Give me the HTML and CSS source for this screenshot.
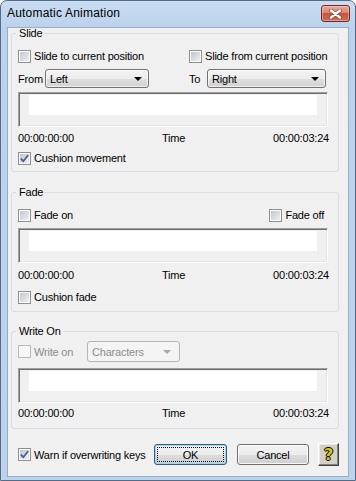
FILE: index.html
```html
<!DOCTYPE html>
<html lang="en">
<head>
    <meta charset="UTF-8">
    <title>Automatic Animation</title>
    <link rel="stylesheet" href="styles.css">
</head>
<body>

<div class="window">
    <div class="titlebar">
        <span class="title">Automatic Animation</span>
        <span class="close-btn">
            <svg width="13" height="10" viewBox="0 0 13 10">
                <path d="M2 1.5 L11 8.5 M11 1.5 L2 8.5" stroke="#5a2418" stroke-width="4" stroke-linecap="round" opacity="0.55"/>
                <path d="M2 1.5 L11 8.5 M11 1.5 L2 8.5" stroke="#fff" stroke-width="2.4" stroke-linecap="round"/>
            </svg>
        </span>
    </div>

    <div class="client">

        <!-- Slide -->
        <fieldset class="group group-slide">
            <legend>Slide</legend>
            <div class="two-col check-row">
                <label class="check"><span class="cb"></span>Slide to current position</label>
                <label class="check"><span class="cb"></span>Slide from current position</label>
            </div>
            <div class="two-col select-row">
                <div class="field">
                    <span class="lbl lbl-from">From</span>
                    <div class="combo combo-from"><span>Left</span><span class="arrow"></span></div>
                </div>
                <div class="field">
                    <span class="lbl lbl-to">To</span>
                    <div class="combo combo-to"><span>Right</span><span class="arrow"></span></div>
                </div>
            </div>
            <div class="timeline"><div class="track"></div></div>
            <div class="times">
                <span>00:00:00:00</span><span class="mid">Time</span><span class="end">00:00:03:24</span>
            </div>
            <label class="check cushion">
                <span class="cb">
                    <svg width="11" height="11" viewBox="0 0 11 11"><path d="M1.8 5.6 L4.3 8.2 L9.2 2" fill="none" stroke="#4a5f98" stroke-width="1.8"/></svg>
                </span>Cushion movement
            </label>
        </fieldset>

        <!-- Fade -->
        <fieldset class="group group-fade">
            <legend>Fade</legend>
            <div class="fade-row check-row">
                <label class="check"><span class="cb"></span>Fade on</label>
                <label class="check"><span class="cb"></span>Fade off</label>
            </div>
            <div class="timeline"><div class="track"></div></div>
            <div class="times">
                <span>00:00:00:00</span><span class="mid">Time</span><span class="end">00:00:03:24</span>
            </div>
            <label class="check cushion"><span class="cb"></span>Cushion fade</label>
        </fieldset>

        <!-- Write On -->
        <fieldset class="group group-write">
            <legend>Write On</legend>
            <div class="write-row">
                <label class="check disabled"><span class="cb"></span>Write on</label>
                <div class="combo combo-chars disabled"><span>Characters</span><span class="arrow"></span></div>
            </div>
            <div class="timeline"><div class="track"></div></div>
            <div class="times">
                <span>00:00:00:00</span><span class="mid">Time</span><span class="end">00:00:03:24</span>
            </div>
        </fieldset>

        <div class="footer">
            <label class="check">
                <span class="cb">
                    <svg width="11" height="11" viewBox="0 0 11 11"><path d="M1.8 5.6 L4.3 8.2 L9.2 2" fill="none" stroke="#4a5f98" stroke-width="1.8"/></svg>
                </span>Warn if overwriting keys
            </label>
            <div class="btn btn-ok"><span class="focus">OK</span></div>
            <div class="btn btn-cancel">Cancel</div>
            <div class="help-btn">?</div>
        </div>

    </div>
</div>

</body>
</html>
```

FILE: styles.css
```css
* {
    box-sizing: border-box;
}

body {
    margin: 0;
    background: #fff;
    font-family: "Liberation Sans", Arial, sans-serif;
    font-size: 11px;
    letter-spacing: -0.2px;
    color: #000;
}

/* window frame */
.window {
    width: 356px;
    height: 481px;
    border: 1px solid #566b85;
    border-radius: 7px 7px 0 0;
    background: linear-gradient(#cadef3 0, #bad2eb 26px, #bcd3ec 100%);
    display: flex;
    flex-direction: column;
}

.titlebar {
    height: 26px;
    display: flex;
    align-items: flex-start;
    padding-left: 6px;
}

.title {
    font-size: 12px;
    letter-spacing: 0.2px;
    line-height: 14px;
    margin-top: 5px;
}

.close-btn {
    margin-left: auto;
    margin-right: 5px;
    margin-top: 4px;
    width: 29px;
    height: 17px;
    border: 1px solid #6a2e25;
    border-radius: 3px;
    background: linear-gradient(#e9a99a 0, #d98473 45%, #c6553f 50%, #cf6a52 100%);
    box-shadow: inset 0 0 0 1px rgba(255, 220, 210, 0.45);
    display: flex;
    align-items: center;
    justify-content: center;
}

.client {
    flex: 1;
    margin: 0 6px 3px 6px;
    border: 1px solid #97adc7;
    background: #f0f0f0;
    display: flex;
    flex-direction: column;
}

/* group boxes */
.group {
    width: 328px;
    margin: 0 0 0 3px;
    padding: 0 9px 0 6px;
    border: 1px solid #d5dfe5;
    border-radius: 3px;
    min-width: 0;
}

.group legend {
    padding: 0 2px 0 3px;
    margin-left: -2px;
    line-height: 11px;
}

.group-slide {
    padding-top: 9px;
    padding-bottom: 5px;
}

.group-fade {
    margin-top: 15px;
    padding-top: 9px;
    padding-bottom: 6px;
}

.group-write {
    margin-top: 14px;
    padding-top: 4px;
    padding-bottom: 8px;
}

/* checkboxes */
.check {
    display: flex;
    align-items: center;
    height: 16px;
    white-space: nowrap;
}

.cb {
    width: 13px;
    height: 13px;
    flex: none;
    margin-right: 3px;
    border: 1px solid #8e8f8f;
    padding: 1px;
    background: linear-gradient(135deg, #c2c6cc, #eef0f2) content-box, #fbfbfb;
    display: flex;
    align-items: center;
    justify-content: center;
}

.cb svg {
    margin: -2px;
}

.check.disabled {
    color: #8d8d8d;
}

.check.disabled .cb {
    border-color: #b8b8b8;
    background: #f7f7f7;
}

.two-col {
    display: grid;
    grid-template-columns: 171px 1fr;
}

.select-row {
    margin-top: 5px;
}

.field {
    display: flex;
    align-items: center;
}

.lbl-from {
    width: 27px;
}

.lbl-to {
    width: 18px;
}

/* combo boxes */
.combo {
    display: flex;
    align-items: center;
    height: 19px;
    padding-left: 4px;
    border: 1px solid #707070;
    border-radius: 3px;
    background: linear-gradient(#f3f3f3, #ececec 50%, #dfdfdf 50%, #d2d2d2);
    box-shadow: inset 0 0 0 1px rgba(255, 255, 255, 0.7);
}

.combo .arrow {
    margin-left: auto;
    margin-right: 6px;
    width: 0;
    height: 0;
    border-left: 4px solid transparent;
    border-right: 4px solid transparent;
    border-top: 4px solid #000;
}

.combo-from {
    width: 104px;
}

.combo-to {
    width: 119px;
}

.combo.disabled {
    width: 93px;
    height: 21px;
    border-color: #b5b5b5;
    background: #f4f4f4;
    box-shadow: none;
    color: #8d8d8d;
}

.combo.disabled .arrow {
    border-top-color: #a8a8a8;
    margin-right: 8px;
}

/* timeline strip */
.timeline {
    height: 35px;
    margin-top: 4px;
    margin-right: 1px;
    padding: 2px 10px 0 10px;
    border-style: solid;
    border-width: 1px;
    border-color: #a0a0a0 #ffffff #ffffff #a0a0a0;
    box-shadow: inset 1px 1px 0 #6e6e6e, inset -1px -1px 0 #e3e3e3;
}

.track {
    height: 20px;
    background: #fff;
}

.times {
    display: grid;
    grid-template-columns: 1fr auto 1fr;
    height: 14px;
    line-height: 14px;
    margin-top: 4px;
}

.times .end {
    text-align: right;
}

.cushion {
    margin-top: 5px;
}

.group-fade .timeline {
    margin-top: 5px;
}

.group-fade .times {
    margin-top: 5px;
}

.group-fade .cushion {
    margin-top: 7px;
}

.fade-row {
    display: flex;
    justify-content: space-between;
    padding-right: 5px;
}

.write-row {
    display: flex;
    align-items: center;
    height: 21px;
}

.write-row .check {
    width: 69px;
}

.group-write .timeline {
    margin-top: 6px;
}

.group-write .times {
    margin-top: 3px;
}

/* bottom buttons */
.footer {
    display: flex;
    align-items: center;
    height: 23px;
    margin-top: 14px;
    padding: 0 9px 0 10px;
}

.btn {
    height: 21px;
    border: 1px solid #707070;
    border-radius: 3px;
    background: linear-gradient(#f3f3f3, #ececec 50%, #dddddd 50%, #cfcfcf);
    box-shadow: inset 0 0 0 1px rgba(255, 255, 255, 0.8);
    display: flex;
    align-items: center;
    justify-content: center;
}

.btn-ok {
    width: 73px;
    margin-left: auto;
    padding: 2px;
    border-color: #2f5b84;
    box-shadow: inset 0 0 0 1px #9fd5ef;
}

.btn-ok .focus {
    flex: 1;
    height: 100%;
    border: 1px dotted #000;
    display: flex;
    align-items: center;
    justify-content: center;
}

.btn-cancel {
    width: 72px;
    margin-left: 10px;
}

.help-btn {
    width: 21px;
    height: 23px;
    margin-left: 9px;
    border: 1px solid;
    border-color: #ffffff #404040 #404040 #ffffff;
    box-shadow: inset -1px -1px 0 #808080, inset 1px 1px 0 #e8e8e8;
    background: #d4d0c8;
    display: flex;
    align-items: center;
    justify-content: center;
    font-family: "DejaVu Sans", sans-serif;
    font-weight: bold;
    font-size: 16px;
    color: #d8c800;
    text-shadow: 1px 0 0 #000, -1px 0 0 #000, 0 1px 0 #000, 0 -1px 0 #000;
}
```
